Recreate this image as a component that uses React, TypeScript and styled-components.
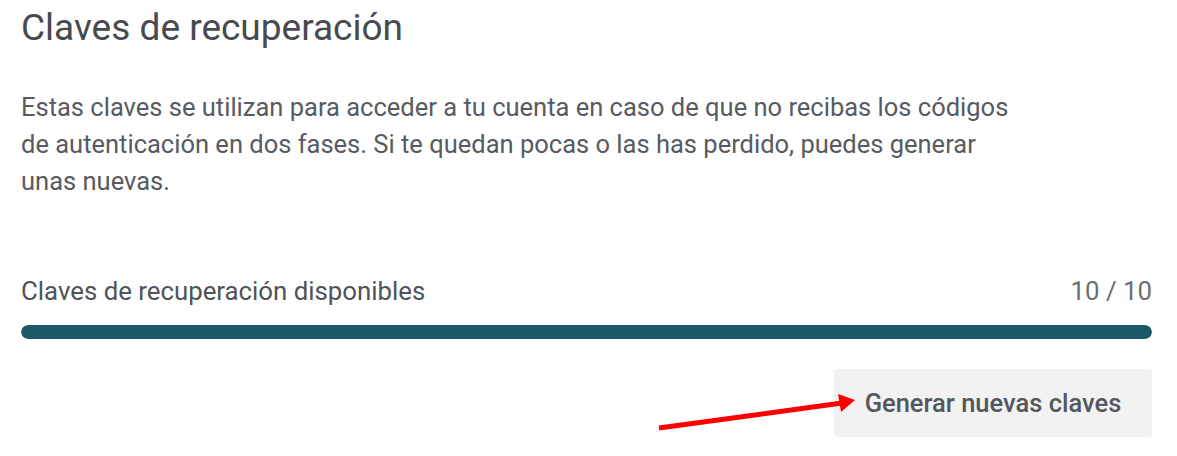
import React from "react";
import styled, { createGlobalStyle } from "styled-components";

const GlobalStyle = createGlobalStyle`
  html, body {
    margin: 0;
    padding: 0;
    background: #ffffff;
  }
  body {
    font-family: Roboto, "Noto Sans", "Liberation Sans", sans-serif;
    -webkit-font-smoothing: antialiased;
  }
`;

const Page = styled.div`
  width: 1177px;
  height: 456px;
  box-sizing: border-box;
  padding: 6px 25px 0 21px;
  position: relative;
  overflow: hidden;
`;

const Title = styled.h2`
  margin: 0;
  font-size: 37px;
  font-weight: 400;
  line-height: 44px;
  color: #474a4f;
`;

const Description = styled.p`
  margin: 39px 0 0;
  width: 1000px;
  font-size: 25.5px;
  line-height: 37px;
  color: #575b61;
`;

const Summary = styled.div`
  margin-top: 76px;
`;

const SummaryHeader = styled.div`
  display: flex;
  justify-content: space-between;
  align-items: baseline;
  font-size: 25.8px;
  line-height: 30px;
`;

const Label = styled.span`
  color: #4f5358;
`;

const Count = styled.span`
  color: #6b6e72;
`;

const Track = styled.div`
  margin-top: 19px;
  height: 14px;
  border-radius: 7px;
  background: #e4e8ea;
  overflow: hidden;
`;

const Fill = styled.div`
  height: 100%;
  border-radius: 7px;
  background: #1b5967;
`;

const Actions = styled.div`
  display: flex;
  justify-content: flex-end;
  margin-top: 30px;
`;

const Button = styled.button`
  height: 68px;
  width: 318px;
  padding: 0;
  border: none;
  border-radius: 4px;
  background: #f2f2f2;
  font-family: inherit;
  font-size: 25.5px;
  font-weight: 500;
  color: #54575c;
  cursor: pointer;
`;

const Arrow = styled.svg`
  position: absolute;
  left: 650px;
  top: 385px;
  pointer-events: none;
`;

export default function App() {
  const available = 10;
  const total = 10;
  return (
    <>
      <GlobalStyle />
      <Page>
        <Title>Claves de recuperación</Title>
        <Description>
          Estas claves se utilizan para acceder a tu cuenta en caso de que no
          recibas los códigos de autenticación en dos fases. Si te quedan pocas
          o las has perdido, puedes generar unas nuevas.
        </Description>
        <Summary>
          <SummaryHeader>
            <Label>Claves de recuperación disponibles</Label>
            <Count>
              {available} / {total}
            </Count>
          </SummaryHeader>
          <Track>
            <Fill style={{ width: `${(available / total) * 100}%` }} />
          </Track>
        </Summary>
        <Actions>
          <Button>Generar nuevas claves</Button>
        </Actions>
        <Arrow width="220" height="55" viewBox="0 0 220 55">
          <line x1="9" y1="43" x2="192" y2="18" stroke="#ff0000" strokeWidth="5" />
          <polygon points="205,15 188,9 191,27" fill="#ff0000" />
        </Arrow>
      </Page>
    </>
  );
}
